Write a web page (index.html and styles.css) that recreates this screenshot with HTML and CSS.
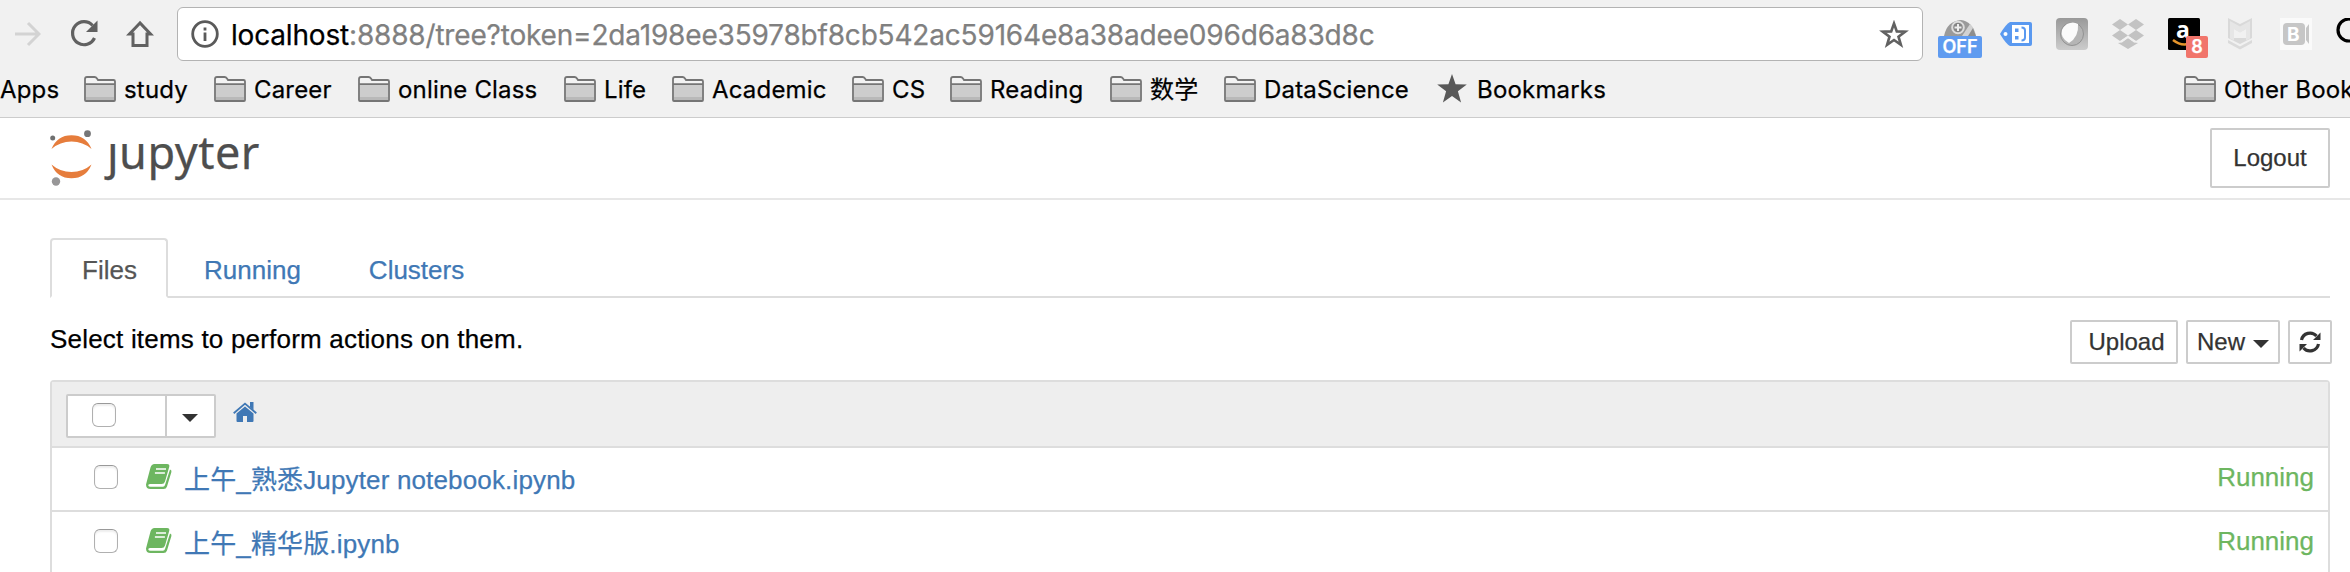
FILE: index.html
```
<!DOCTYPE html>
<html lang="en">
<head>
<meta charset="utf-8">
<title>Home</title>
<link rel="stylesheet" href="styles.css">
</head>
<body>
<svg class="defs" width="0" height="0">
  <symbol id="folder" viewBox="0 0 32 26">
    <path d="M1 24V3q0-2 2-2h7.500q1.500 0 2.500 1.500L14 4h15.500q1.500 0 1.500 1.500V24q0 1-1 1H2q-1 0-1-1z" fill="#f3f3f3"/>
    <path d="M2 9h28v15H2z" fill="#cdcdcd"/>
    <path d="M2 21h28v3H2z" fill="#b9b9b9"/>
    <path d="M1 8.200h30M1 24V3q0-2 2-2h7.500q1.500 0 2.500 1.500L14 4h15.500q1.500 0 1.500 1.500V24q0 1-1 1H2q-1 0-1-1z" fill="none" stroke="#757575" stroke-width="1.800"/>
  </symbol>
  <symbol id="book" viewBox="0 0 26 25">
    <path d="M8.500 0H21q3 0 2.200 3L19 17.500q-.8 2.500-3.500 2.500H4q-2 0-1.700 1.500.3 1.300 2.200 1.300h12.500q1.500 0 2-1.700L24 5.500q2 .6 1.400 2.600L21 22.500q-.8 2.500-3.500 2.500H4.500Q0 25 0 20.500L4.500 3.500Q5.500 0 8.500 0z" fill="#6db660"/>
    <path d="M10 5h10M8.900 9h10" stroke="#fff" stroke-width="1.700"/>
  </symbol>
</svg>
<header class="browser">
  <div class="toolbar">
    <svg class="nav forward" viewBox="0 0 28 28"><path d="M2 14h24M15 3l11 11-11 11" fill="none" stroke="#d3d3d3" stroke-width="3"/></svg>
    <svg class="nav reload" viewBox="0 0 28 28"><path d="M22.600 5.500A11.500 11.500 0 1 0 24.500 18" fill="none" stroke="#616161" stroke-width="3.200"/><path d="M27.500 .5V12H16z" fill="#616161"/></svg>
    <svg class="nav home" viewBox="0 0 28 28"><path d="M14 3L3.500 14H7v11.500h14V14h3.500z" fill="none" stroke="#616161" stroke-width="3"/></svg>
    <div class="omnibox">
      <svg class="info" viewBox="0 0 28 28"><circle cx="14" cy="14" r="12.300" fill="none" stroke="#5a5a5a" stroke-width="2.800"/><path d="M14 12.500V21M14 7.500v3" stroke="#5a5a5a" stroke-width="2.800"/></svg>
      <span class="url"><b>localhost</b>:8888/tree?token=2da198ee35978bf8cb542ac59164e8a38adee096d6a83d8c</span>
      <svg class="star" viewBox="0 0 30 29"><path d="M15 3.500l2.800 7.900 8.400.2-6.700 5.100 2.400 8.100-6.900-4.800-6.900 4.800 2.400-8.100-6.700-5.100 8.400-.2z" fill="none" stroke="#616161" stroke-width="2.600"/></svg>
    </div>
    <div class="ext off">
      <svg viewBox="0 0 32 32"><path d="M0 17Q3 2 17 1q11 1 15 16z" fill="#9a9a9a"/><path d="M18 17L26 5q5 5 6 12z" fill="#d2d2d2"/><path d="M24 17l5-8 3 8z" fill="#8d8d8d"/><circle cx="14" cy="8.500" r="5.800" fill="#858585" stroke="#ddd" stroke-width="2"/><path d="M14 5v7M10.500 8.500h7" stroke="#eee" stroke-width="2"/></svg>
      <span class="badge">OFF</span>
    </div>
    <div class="ext tag"><svg viewBox="0 0 32 32"><path d="M10 3h20q2 0 2 2v20q0 2-2 2H10Q6 25 0 15 6 5 10 3z" fill="#5a99f0"/><path d="M12 6h17v18H12z" fill="#fff"/><circle cx="5.500" cy="15" r="2" fill="#fff"/><path d="M15 9.500h3.500v3.500H15zM15 17h3.500v3.500H15z" fill="#5a99f0"/><path d="M21.500 8.500q3.500 0 3.500 3v7q0 3-3.500 3" fill="none" stroke="#5a99f0" stroke-width="2"/></svg></div>
    <div class="ext ball"><svg viewBox="0 0 32 32"><defs><linearGradient id="g" x2="0" y2="1"><stop stop-color="#999"/><stop offset="1" stop-color="#ccc"/></linearGradient></defs><rect width="32" height="32" rx="4" fill="url(#g)"/><circle cx="16" cy="16" r="11.500" fill="#b5b5b5" stroke="#929292" stroke-width="1"/><path d="M11 6Q17 3 22 6q1 13-9 19Q4 20 6 12q2-4 5-6z" fill="#fbfbfb"/></svg></div>
    <div class="ext box"><svg viewBox="0 0 32 32"><path d="M8 1l8 5.500L8 12 0 6.500zM24 1l8 5.500-8 5.500-8-5.500zM8 12l8 5.500L8 23l-8-5.500zM24 12l8 5.500-8 5.500-8-5.500z" fill="#c3c3c3"/><path d="M6 25l4-.5 6-4.500 6 4.500 4 .5-10 6z" fill="#c3c3c3"/><path d="M9 23.500l7-4.500 7 4.500" fill="none" stroke="#f1f1f1" stroke-width="1.500"/></svg></div>
    <div class="ext amazon">
      <svg viewBox="0 0 32 32"><rect width="32" height="32" rx="1.500" fill="#000"/><path d="M5 22q9 7 18 3" fill="none" stroke="#e5942b" stroke-width="2.500"/><text x="8" y="20" class="a">a</text></svg>
      <span class="badge">8</span>
    </div>
    <div class="ext shield"><svg viewBox="0 0 24 32"><path d="M0 0l12 6 12-6v20l-12 6-12-6z" fill="#d9d9d9"/><path d="M2 3l10 5.500L22 3v17.500l-4 2V11l-6 3.500L6 11v11.500l-4-2z" fill="#e6e6e6"/><path d="M6 11l6 3.500 6-3.500v9h-12z" fill="#f1f1f1"/><path d="M0 22l12 6.500L24 22v3l-12 6.500L0 25z" fill="#dadada"/></svg></div>
    <div class="ext cam"><svg viewBox="0 0 32 32"><path d="M0 0h32v32H0z" fill="#fafafa"/><rect x="3" y="5" width="22" height="22" rx="4" fill="#c6c6c6"/><path d="M26 10l3-4v20l-3-4z" fill="#c6c6c6"/><text x="7" y="23" class="b">B</text></svg></div>
    <svg class="ext search" viewBox="0 0 28 32"><circle cx="13" cy="12" r="11" fill="none" stroke="#000" stroke-width="3.200"/></svg>
  </div>
  <nav class="bookmarks">
    <span class="apps">Apps</span>
    <a><svg><use href="#folder"/></svg><i>study</i></a>
    <a><svg><use href="#folder"/></svg><i>Career</i></a>
    <a><svg><use href="#folder"/></svg><i>online Class</i></a>
    <a><svg><use href="#folder"/></svg><i>Life</i></a>
    <a><svg><use href="#folder"/></svg><i>Academic</i></a>
    <a><svg><use href="#folder"/></svg><i>CS</i></a>
    <a><svg><use href="#folder"/></svg><i>Reading</i></a>
    <a><svg><use href="#folder"/></svg><i>数学</i></a>
    <a><svg><use href="#folder"/></svg><i>DataScience</i></a>
    <a><svg class="fav" viewBox="0 0 30 29"><path d="M15 0l3.600 10.300 11.200.2-8.900 6.700 3.200 11.300L15 22l-9.100 6.500 3.200-11.300L.2 10.500l11.200-.2z" fill="#595959"/></svg><i>Bookmarks</i></a>
    <a><svg><use href="#folder"/></svg><i>Other Bookmarks</i></a>
  </nav>
</header>
<div class="masthead">
  <div class="logo">
    <svg viewBox="0 0 42 56"><circle cx="2.700" cy="8" r="2.500" fill="#6f7070"/><circle cx="37.500" cy="3.700" r="3.400" fill="#767677"/><circle cx="6" cy="51.500" r="4.200" fill="#989798"/><path d="M1.500 19Q7 5.200 21.500 5.200T41.500 19Q33 11.500 21.500 11.500T1.500 19zM1.500 34.500Q7 48.300 21.500 48.300T41.500 34.500Q33 42 21.500 42T1.500 34.500z" fill="#e67d3c"/></svg>
    <span class="word">ȷupyter</span>
  </div>
  <button class="logout">Logout</button>
</div>
<main class="page">
  <nav class="tabs"><a class="active">Files</a><a>Running</a><a>Clusters</a></nav>
  <div class="actions">
    <p>Select items to perform actions on them.</p>
    <button class="upload">Upload</button>
    <button class="new">New<svg class="caret" viewBox="0 0 16 8"><path d="M0 0h16L8 8z"/></svg></button>
    <button class="refresh"><svg viewBox="0 0 22 22"><path d="M2.500 9A8.700 8.700 0 0 1 17.500 5M19.500 13A8.700 8.700 0 0 1 4.500 17" fill="none" stroke="#333" stroke-width="3.200"/><path d="M21.500 1.500V9H14zM.5 20.500V13H8z" fill="#333"/></svg></button>
  </div>
  <section class="list">
    <div class="listhead">
      <div class="select"><span class="all"><span class="check"></span></span><span class="drop"><svg class="caret" viewBox="0 0 16 8"><path d="M0 0h16L8 8z"/></svg></span></div>
      <svg class="house" viewBox="0 0 24 20"><path d="M12 4.500l8.500 7V19q0 1-1 1H14v-6h-4v6H4.500q-1 0-1-1v-7.500z" fill="#4078b5"/><path d="M.7 11.200L12 1.600l11.300 9.600" fill="none" stroke="#4078b5" stroke-width="1.800"/><path d="M17 0h3.500v8L17 5z" fill="#4078b5"/></svg>
    </div>
    <div class="row"><span class="check"></span><svg class="book"><use href="#book"/></svg><a>上午_熟悉Jupyter notebook.ipynb</a><em>Running</em></div>
    <div class="row"><span class="check"></span><svg class="book"><use href="#book"/></svg><a>上午_精华版.ipynb</a><em>Running</em></div>
  </section>
</main>
</body>
</html>
```
FILE: styles.css
```
* { box-sizing: border-box; }
body { margin: 0; width: 2350px; height: 572px; overflow: hidden; background: #fff; color: #000; font: 26px/36px "Liberation Sans", "Noto Sans CJK SC", sans-serif; -webkit-text-stroke: .25px; }
svg { display: block; flex: none; }
.defs { position: absolute; }
button { font: inherit; color: #333; background: #fff; border: 2px solid #ccc; border-radius: 2px; padding: 0; display: flex; align-items: center; justify-content: center; }

.browser { height: 118px; background: #f1f1f1; border-bottom: 1px solid #ccc; font-family: Inter, "Noto Sans CJK SC", sans-serif; overflow: hidden; }
.toolbar { display: flex; height: 68px; padding: 7px 0 0 13px; align-items: flex-start; }
.nav { width: 28px; height: 28px; margin: 13px 28px 0 0; }
.home { margin-right: 23px; }
.omnibox { flex: none; width: 1746px; height: 54px; border: 1px solid #b3b3b3; border-radius: 6px; background: #fff; display: flex; align-items: center; padding: 0 13px; }
.forward { margin-right: 29px; }
.info { width: 28px; height: 28px; margin-right: 12px; }
.url { font-size: 28px; line-height: 40px; letter-spacing: -.18px; color: #808080; white-space: nowrap; padding-top: 1px; }
.url b { font-weight: 400; color: #000; }
.star { width: 30px; height: 29px; margin-left: auto; }
.ext { position: relative; flex: none; width: 32px; height: 32px; margin: 11px 24px 0 0; }
.ext svg { width: 32px; height: 32px; }
.off { margin-left: 21px; margin-top: 12px; }
.tag { margin-top: 12px; }
.shield { width: 24px; margin: 11px 28px 0 4px; }
.shield svg { width: 24px; }
.search { width: 28px; margin-right: -13px; }
.badge { position: absolute; left: -6px; top: 17px; width: 44px; height: 22px; border-radius: 2px; background: #5f9bf0; color: #fff; font: 600 18px/22px Inter, sans-serif; text-align: center; }
.amazon .badge { left: 18px; top: 18px; width: 22px; background: #f1756b; }
.a { font: 700 23px "Open Sans", sans-serif; fill: #fff; }
.b { font: 700 19px Inter, sans-serif; fill: #fff; }

.bookmarks { display: grid; height: 49px; padding-top: 4px; grid-template-columns: 84px 130px 144px 206px 108px 180px 98px 160px 114px 213px 747px 200px; font-size: 24px; line-height: 36px; letter-spacing: .18px; white-space: nowrap; }
.bookmarks a { display: flex; align-items: center; gap: 8px; height: 36px; }
.bookmarks i { font-style: normal; }
.bookmarks svg { width: 32px; height: 26px; margin-top: -3px; }
.bookmarks .fav { width: 30px; height: 29px; margin-top: -4px; margin-right: 2px; }

.masthead { display: flex; justify-content: space-between; height: 82px; padding: 10px 20px 0 50px; border-bottom: 2px solid #e7e7e7; }
.logo { display: flex; padding-top: 2px; }
.logo svg { width: 42px; height: 56px; }
.word { margin: -8px 0 0 15px; font: 45px/60px "Noto Sans", sans-serif; letter-spacing: .5px; color: #4e4e4e; }
.logout { width: 120px; height: 60px; font-size: 24px; }

.page { padding: 38px 20px 0 50px; }
.tabs { display: flex; height: 60px; border-bottom: 2px solid #ddd; }
.tabs a { height: 60px; padding: 12px 30px 0; border: 2px solid transparent; margin-right: 4px; color: #4078b5; }
.tabs .active { width: 118px; border-color: #ddd #ddd #fff; border-radius: 4px 4px 0 0; color: #555; background: #fff; }
.actions { display: flex; height: 82px; padding-top: 22px; margin-right: -2px; }
.actions p { margin: 1px auto 0 0; letter-spacing: .2px; }
.actions button { height: 44px; font-size: 24px; }
.upload { width: 108px; padding-left: 5px; }
.new { width: 94px; margin: 0 8px; gap: 8px; }
.refresh { width: 44px; }
.refresh svg { width: 22px; height: 22px; }
.caret { width: 16px; height: 8px; fill: #333; }
.new .caret { margin-top: 4px; }
.list { border: 2px solid #ddd; border-radius: 4px 4px 0 0; height: 220px; }
.listhead { display: flex; height: 66px; padding: 12px 14px 0; background: #eee; border-bottom: 2px solid #ddd; }
.select { display: flex; width: 150px; height: 44px; border: 2px solid #ccc; border-radius: 2px; background: #fff; }
.all { width: 99px; padding: 7px 0 0 24px; border-right: 2px solid #ccc; }
.drop { flex: 1; display: flex; align-items: center; justify-content: center; padding: 3px 2px 0 0; }
.check { display: block; flex: none; width: 24px; height: 24px; border: 1.500px solid #b0b0b0; border-top-color: #999; border-radius: 6px; background: #fff; box-shadow: inset 0 2px 2px #eee; }
.house { width: 24px; height: 20px; margin: 8px 0 0 17px; }
.row { display: flex; height: 64px; padding: 17px 14px 0 42px; border-bottom: 2px solid #ddd; }
.book { width: 26px; height: 25px; margin: -1px 12px 0 28px; }
.row a { color: #4078b5; line-height: 30px; letter-spacing: .15px; white-space: nowrap; }
.row em { font-style: normal; margin-left: auto; color: #6db660; line-height: 30px; margin-top: -3px; }
```
